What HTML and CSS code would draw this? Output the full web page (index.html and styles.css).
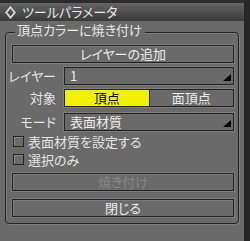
FILE: index.html
```html
<!DOCTYPE html>
<html lang="ja">
<head>
<meta charset="utf-8">
<link rel="stylesheet" href="styles.css">
</head>
<body>
<div class="window">
  <div class="titlebar">
    <svg class="diamond" width="11" height="13" viewBox="0 0 11 13"><polygon points="5.5,1.2 9.8,6.5 5.5,11.8 1.2,6.5" fill="none" stroke="#d8d8d8" stroke-width="1.8"/></svg>
    <span class="title">ツールパラメータ</span>
  </div>
  <div class="group">
    <span class="group-title">頂点カラーに焼き付け</span>
    <button class="btn">レイヤーの追加</button>
    <div class="row row-layer">
      <span class="label">レイヤー</span>
      <div class="select"><span>1</span><svg class="tri" width="8" height="7" viewBox="0 0 8 7"><polygon points="8,0 8,7 0,7" fill="#000"/></svg></div>
    </div>
    <div class="row row-target">
      <span class="label">対象</span>
      <div class="seg"><span class="seg-item on">頂点</span><span class="seg-item">面頂点</span></div>
    </div>
    <div class="row row-mode">
      <span class="label">モード</span>
      <div class="select"><span>表面材質</span><svg class="tri" width="8" height="7" viewBox="0 0 8 7"><polygon points="8,0 8,7 0,7" fill="#000"/></svg></div>
    </div>
    <div class="check check-1"><span class="box"></span><span class="check-text">表面材質を設定する</span></div>
    <div class="check check-2"><span class="box"></span><span class="check-text">選択のみ</span></div>
    <button class="btn btn-bake" disabled>焼き付け</button>
    <button class="btn btn-close">閉じる</button>
  </div>
</div>
</body>
</html>
```
FILE: styles.css
```css
html, body {
  margin: 0;
  padding: 0;
}
body {
  width: 250px;
  height: 241px;
  overflow: hidden;
  background: #6a6a6a;
  font-family: "Noto Sans CJK JP", "Noto Sans", sans-serif;
  font-size: 13px;
  font-feature-settings: "palt";
  color: #e4e4e4;
}
.window {
  box-sizing: border-box;
  height: 241px;
  border-top: 3px solid #2c2c2c;
  border-right: 6px solid #262626;
  display: flex;
  flex-direction: column;
}
.titlebar {
  height: 18px;
  flex: none;
  background: linear-gradient(#646464, #3a3a3a);
  display: flex;
  align-items: center;
  padding-left: 5px;
  gap: 6px;
}
.diamond {
  display: block;
}
.title {
  line-height: 14px;
  color: #e8e8e8;
}
.group {
  position: relative;
  box-sizing: border-box;
  width: 234px;
  height: 192px;
  margin: 11px 0 0 5px;
  border: 1px solid #242424;
  border-radius: 4px;
  box-shadow: 1px 1px 0 #7e7e7e, inset 1px 1px 0 #7e7e7e;
  padding: 12px 4px 0 6px;
  display: flex;
  flex-direction: column;
}
.group-title {
  position: absolute;
  left: 9px;
  top: -11px;
  padding: 0 3px 0 2px;
  line-height: 16px;
  background: #6a6a6a;
  color: #e8e8e8;
}
.btn {
  box-sizing: border-box;
  flex: none;
  height: 18px;
  width: 100%;
  margin: 0;
  padding: 0;
  background: #6a6a6a;
  border: 1px solid #242424;
  box-shadow: 0 0 0 1px #7c7c7c, inset 1px 1px 0 #7c7c7c;
  font: inherit;
  color: #ececec;
  line-height: 16px;
  text-align: center;
}
.btn:disabled {
  color: #888888;
}
.btn-bake {
  margin-top: 6px;
}
.btn-close {
  margin-top: 8px;
}
.row {
  display: flex;
  flex: none;
  align-items: center;
  gap: 8px;
  height: 18px;
}
.row-layer { margin-top: 4px; }
.row-target { margin-top: 4px; }
.row-mode { margin-top: 6px; }
.label {
  flex: none;
  width: 44px;
  display: flex;
  justify-content: flex-end;
  white-space: nowrap;
  line-height: 16px;
}
.select {
  position: relative;
  box-sizing: border-box;
  flex: 1;
  height: 18px;
  border: 1px solid #242424;
  box-shadow: 0 0 0 1px #7c7c7c;
  padding-left: 5px;
  line-height: 16px;
  color: #ececec;
}
.tri {
  position: absolute;
  right: 2px;
  bottom: 3px;
  display: block;
}
.seg {
  flex: 1;
  height: 18px;
  box-sizing: border-box;
  border: 1px solid #242424;
  box-shadow: 0 0 0 1px #7c7c7c;
  display: flex;
}
.seg-item {
  flex: 1;
  text-align: center;
  line-height: 16px;
  color: #ececec;
}
.seg-item.on {
  background: #f2f200;
  color: #000;
  border-right: 1px solid #242424;
}
.check {
  display: flex;
  flex: none;
  align-items: center;
  gap: 4px;
  height: 15px;
  padding-left: 1px;
}
.check-text {
  line-height: 15px;
}
.check-1 { margin-top: 3px; }
.check-2 { margin-top: 3px; }
.box {
  box-sizing: border-box;
  width: 11px;
  height: 11px;
  border: 1px solid #242424;
  box-shadow: inset 1px 1px 0 #8a8a8a;
  background: #6a6a6a;
}
```
